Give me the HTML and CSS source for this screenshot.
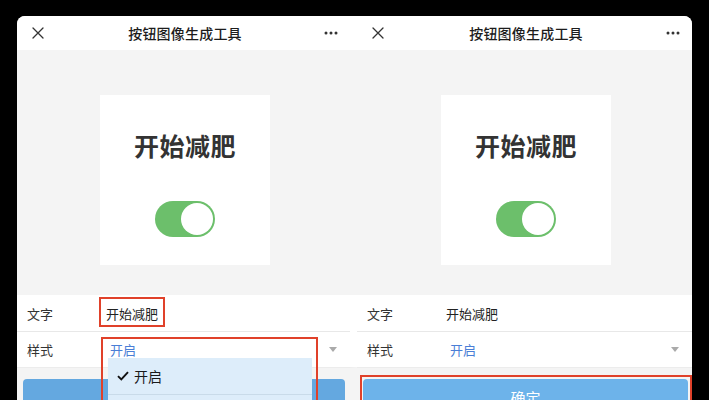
FILE: index.html
```html
<!DOCTYPE html>
<html lang="zh-CN">
<head>
<meta charset="utf-8">
<title>按钮图像生成工具</title>
<link rel="stylesheet" href="styles.css">
</head>
<body>
<div class="stage">
  <div class="phone phone--left">
    <section class="nav">
      <svg class="nav-close" width="12" height="12" viewBox="0 0 12 12"><path d="M1 1L11 11M11 1L1 11" stroke="#333" stroke-width="1.3" fill="none" stroke-linecap="round"/></svg>
      <div class="nav-title">按钮图像生成工具</div>
      <svg class="nav-more" width="14" height="4" viewBox="0 0 14 4"><circle cx="2" cy="2" r="1.5" fill="#333"/><circle cx="7" cy="2" r="1.5" fill="#333"/><circle cx="12" cy="2" r="1.5" fill="#333"/></svg>
    </section>
    <section class="canvas">
      <div class="card">
        <div class="card-text">开始减肥</div>
        <div class="toggle"><span class="toggle-knob"></span></div>
      </div>
    </section>
    <section class="form">
      <div class="row"><span class="row-label">文字</span><span class="row-value">开始减肥</span></div>
      <div class="row"><span class="row-label">样式</span><span class="row-value row-value--select">开启</span><span class="caret"></span></div>
    </section>
    <section class="actions">
      <div class="btn">确定</div>
    </section>
    <div class="mark mark--text"></div>
    <div class="mark mark--select"></div>
    <div class="menu">
      <div class="menu-item">
        <svg class="menu-check" width="12" height="10" viewBox="0 0 12 10"><path d="M1 5.2L4.3 8.5L11 1.2" stroke="#111" stroke-width="1.9" fill="none"/></svg>
        <span>开启</span>
      </div>
      <div class="menu-item"></div>
    </div>
  </div>
  <div class="phone phone--right">
    <section class="nav">
      <svg class="nav-close" width="12" height="12" viewBox="0 0 12 12"><path d="M1 1L11 11M11 1L1 11" stroke="#333" stroke-width="1.3" fill="none" stroke-linecap="round"/></svg>
      <div class="nav-title">按钮图像生成工具</div>
      <svg class="nav-more" width="14" height="4" viewBox="0 0 14 4"><circle cx="2" cy="2" r="1.5" fill="#333"/><circle cx="7" cy="2" r="1.5" fill="#333"/><circle cx="12" cy="2" r="1.5" fill="#333"/></svg>
    </section>
    <section class="canvas">
      <div class="card">
        <div class="card-text">开始减肥</div>
        <div class="toggle"><span class="toggle-knob"></span></div>
      </div>
    </section>
    <section class="form">
      <div class="row"><span class="row-label">文字</span><span class="row-value">开始减肥</span></div>
      <div class="row"><span class="row-label">样式</span><span class="row-value row-value--select">开启</span><span class="caret"></span></div>
    </section>
    <section class="actions">
      <div class="btn btn--light">确定</div>
    </section>
    <div class="mark mark--button"></div>
  </div>
</div>
</body>
</html>
```
FILE: styles.css
```css
* { box-sizing: border-box; }

html, body {
  margin: 0;
  padding: 0;
  background: #000;
  width: 709px;
  height: 400px;
  overflow: hidden;
  font-family: "Noto Sans CJK SC", "Noto Sans", sans-serif;
  color: #222;
}

.stage {
  display: flex;
  padding: 16px 0 0 17px;
  height: 400px;
}

.phone {
  position: relative;
  display: flex;
  flex-direction: column;
  background: #f4f4f4;
  height: 384px;
  overflow: hidden;
}

.phone > section {
  flex-shrink: 0;
}

.phone--left {
  width: 340px;
  border-top-left-radius: 8px;
}

.phone--left > section {
  border-right: 7px solid transparent;
}

.phone--right {
  width: 335px;
  border-top-right-radius: 8px;
}

.nav {
  height: 34px;
  background: #fff;
  display: grid;
  grid-template-columns: 1fr auto 1fr;
  align-items: center;
  padding: 0 12px 0 15px;
}

.nav-close { justify-self: start; }
.nav-more { justify-self: end; }

.nav-title {
  font-size: 14px;
  font-weight: 500;
  color: #1c1c1c;
  letter-spacing: 0.2px;
}

.canvas {
  height: 245px;
  background: #f4f4f4;
  display: flex;
  justify-content: center;
  padding-top: 45px;
}

.card {
  width: 170px;
  height: 170px;
  background: #fff;
  display: flex;
  flex-direction: column;
  align-items: center;
  padding-top: 36px;
  margin-left: 3px;
}

.card-text {
  font-size: 25px;
  line-height: 28px;
  font-weight: 700;
  color: #333;
  letter-spacing: 0.5px;
}

.toggle {
  margin-top: 42px;
  width: 60px;
  height: 36px;
  border-radius: 18px;
  background: #6cbf6b;
  position: relative;
}

.toggle-knob {
  position: absolute;
  right: 2px;
  top: 2px;
  width: 32px;
  height: 32px;
  border-radius: 50%;
  background: #fff;
}

.form {
  background: #fff;
}

.row {
  height: 36px;
  display: flex;
  align-items: center;
  padding: 0 13px 0 10px;
  font-size: 13px;
  color: #222;
}

.row + .row {
  border-top: 1px solid #e8e8e8;
}

.row-label {
  width: 79px;
  color: #333;
}

.row-value--select {
  margin-left: 4px;
  color: #4a7ed6;
  flex: 1;
}

.caret {
  width: 0;
  height: 0;
  border-left: 4px solid transparent;
  border-right: 4px solid transparent;
  border-top: 5px solid #aaa;
}

.actions {
  flex: 1;
  background: #f4f4f4;
  border-top: 1px solid #ececec;
  padding: 11px 5px 0 6px;
}

.btn {
  height: 40px;
  border-radius: 4px;
  background: #64a8e0;
  color: #fff;
  font-size: 15px;
  text-align: center;
  padding-top: 8px;
}

.btn--light {
  background: #6db3ea;
  margin-right: -1px;
}

/* red highlight frames drawn over the screens */
.mark {
  position: absolute;
  border: 2px solid #e0412a;
}

.mark--text {
  left: 82px;
  top: 281px;
  width: 66px;
  height: 30px;
}

.mark--select {
  left: 84px;
  top: 321px;
  width: 217px;
  height: 80px;
}

.mark--button {
  left: 3px;
  top: 359px;
  width: 332px;
  height: 40px;
}

.menu {
  position: absolute;
  left: 91px;
  top: 342px;
  width: 204px;
  height: 60px;
  background: #ddedfa;
}

.menu-item {
  height: 37px;
  display: flex;
  align-items: center;
  padding-left: 9px;
  font-size: 14px;
  color: #1a1a1a;
  border-bottom: 1px solid #c9dbe9;
}

.menu-check {
  margin-right: 5px;
}
```
